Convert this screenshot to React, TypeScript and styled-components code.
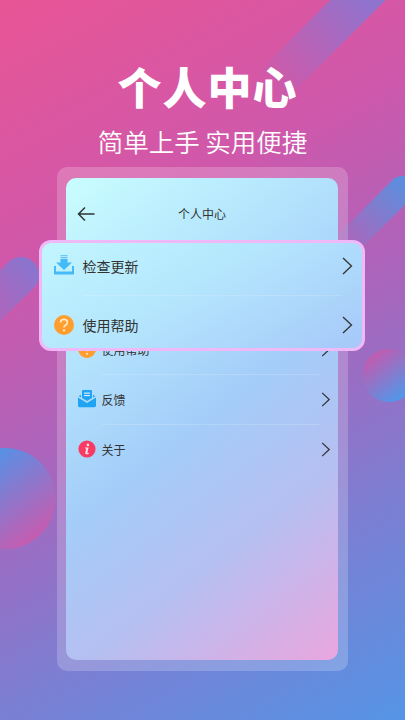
import React from "react";
import styled, { createGlobalStyle } from "styled-components";

const CJK = `"Noto Sans CJK SC", "Noto Sans", sans-serif`;

const GlobalStyle = createGlobalStyle`
  html, body {
    margin: 0;
    padding: 0;
    background: #8f70c8;
    font-family: ${CJK};
  }
`;

const Stage = styled.div`
  position: relative;
  width: 405px;
  height: 720px;
  overflow: hidden;
  box-sizing: border-box;
  padding-top: 64px;
  display: flex;
  flex-direction: column;
  align-items: center;
  background: linear-gradient(152deg, #e85595 0%, #cf58ab 30%, #a965bc 52%, #7d7ed2 75%, #5594e5 100%);
`;

const Backdrop = styled.svg`
  position: absolute;
  inset: 0;
  width: 405px;
  height: 720px;
`;

const Title = styled.h1`
  position: relative;
  margin: 0 0 0 10px;
  font-size: 44px;
  line-height: 44px;
  font-weight: 900;
  letter-spacing: 1px;
  color: #fff;
`;

const Subtitle = styled.h2`
  position: relative;
  margin: 18px 0 11px;
  font-size: 25.5px;
  line-height: 30px;
  font-weight: 350;
  color: #fff;
`;

const Frame = styled.div`
  position: relative;
  width: 291px;
  height: 504px;
  margin-right: 1px;
  box-sizing: border-box;
  padding: 11px 9.5px;
  border-radius: 10px;
  background: rgba(255, 255, 255, 0.2);
`;

const Panel = styled.div`
  height: 100%;
  border-radius: 10px;
  color: #333;
  background: linear-gradient(142deg, #c9feff 0%, #b5e6fd 25%, #a4cdf9 50%, #b5bff1 72%, #e9a6de 100%);
`;

const Header = styled.div`
  position: relative;
  height: 72px;
  box-sizing: border-box;
  padding-bottom: 2px;
  display: flex;
  align-items: center;
  justify-content: center;
  font-size: 12px;
`;

const BackIcon = styled.svg`
  position: absolute;
  left: 11px;
  top: 28px;
  width: 18px;
  height: 16px;
`;

const List = styled.div`
  padding: 74.5px 5px 0 11.5px;
`;

const Row = styled.div<{ $large?: boolean }>`
  display: flex;
  align-items: center;
  gap: ${(p) => (p.$large ? "9px" : "6px")};
  height: ${(p) => (p.$large ? "46px" : "49px")};
  font-size: ${(p) => (p.$large ? "14px" : "12px")};
`;

const Label = styled.span`
  flex: 1;
`;

const Divider = styled.div<{ $left: number; $right: number; $gap?: number }>`
  height: 1px;
  margin: ${(p) => p.$gap ?? 0}px ${(p) => p.$right}px ${(p) => p.$gap ?? 0}px ${(p) => p.$left}px;
  background: rgba(255, 255, 255, 0.16);
`;

const Popup = styled.div`
  position: absolute;
  left: -18px;
  top: 73px;
  width: 326px;
  height: 111px;
  box-sizing: border-box;
  padding: 0 5.5px 0 12px;
  border: 3px solid #efb8f6;
  border-radius: 12px;
  color: #333;
  background: linear-gradient(150deg, #c2f6fe 0%, #b4e6fd 45%, #a6c8f9 100%);
`;

const IconBox = styled.svg<{ $size: number }>`
  flex: none;
  overflow: visible;
  width: ${(p) => p.$size}px;
  height: ${(p) => p.$size}px;
`;

const Chevron = ({ large }: { large?: boolean }) => (
  <IconBox $size={large ? 18 : 15} viewBox="0 0 18 18" fill="none">
    <path d="M5 1l8.5 8L5 17" stroke="#333" strokeWidth={large ? 1.3 : 1.5} />
  </IconBox>
);

const DownloadIcon = ({ size }: { size: number }) => (
  <IconBox $size={size} viewBox="0 1 20 20">
    <g fill="#46b9f7">
      <rect x="6.5" y="0" width="7" height="1.2" opacity="0.7" />
      <rect x="6.5" y="2" width="7" height="1.2" opacity="0.85" />
      <path d="M6.5 4h7v3.5H18L10 15 2 7.5h4.5z" />
      <path d="M0 11h2v5.500h16V11h2v8.500H0z" />
    </g>
  </IconBox>
);

const HelpIcon = ({ size }: { size: number }) => (
  <IconBox $size={size} viewBox="0 0 20 20">
    <circle cx="10" cy="10" r="10" fill="#ff9e2f" />
    <path
      d="M6.6 7.6c0-2 1.5-3.2 3.4-3.2s3.4 1.2 3.4 3c0 2.6-3.4 2.6-3.4 5.2"
      fill="none"
      stroke="#ffe9c8"
      strokeWidth="1.7"
    />
    <circle cx="10" cy="15.4" r="1.1" fill="#ffe9c8" />
  </IconBox>
);

const MailIcon = ({ size }: { size: number }) => (
  <IconBox $size={size} viewBox="0 0 18 18">
    <path d="M4 1.2C4 .5 4.5 0 5.2 0h7.6c.7 0 1.2.5 1.2 1.2V8l-5 3-5-3z" fill="#1fa3f2" />
    <rect x="6" y="2.6" width="6" height="1.1" fill="#dff3ff" />
    <rect x="6" y="5" width="6" height="1.1" fill="#dff3ff" />
    <path d="M0 7.5L9 13l9-5.5v8.100c0 .9-.7 1.600-1.600 1.600H1.600C.7 17.200 0 16.500 0 15.600z" fill="#1fa3f2" />
    <path d="M3 5v2.400L.6 6zM15 5v2.400L17.400 6z" fill="#1fa3f2" />
  </IconBox>
);

const InfoIcon = ({ size }: { size: number }) => (
  <IconBox $size={size} viewBox="0 0 18 18">
    <circle cx="9" cy="9" r="8.6" fill="#f73b63" />
    <circle cx="9.9" cy="4.9" r="1.3" fill="#ffe3e9" />
    <path d="M7 7.6h3.6l-1.2 5c-.1.5.3.7 1.5.2l-.1.9c-1.5.9-3.8 1-3.5-.9l.9-4.2H7z" fill="#ffe3e9" />
  </IconBox>
);

const Backdrops = () => (
  <Backdrop viewBox="0 0 405 720">
    <defs>
      <linearGradient id="stripeTop" gradientUnits="userSpaceOnUse" x1="365" y1="-5" x2="270" y2="90">
        <stop offset="0" stopColor="#8f74cf" />
        <stop offset="1" stopColor="#8f74cf" stopOpacity="0" />
      </linearGradient>
      <linearGradient id="stripeRight" gradientUnits="userSpaceOnUse" x1="402" y1="186" x2="342" y2="252">
        <stop offset="0" stopColor="#5f8ddd" />
        <stop offset="1" stopColor="#5f8ddd" stopOpacity="0" />
      </linearGradient>
      <linearGradient id="stripeLeft" gradientUnits="userSpaceOnUse" x1="30" y1="268" x2="-40" y2="338">
        <stop offset="0" stopColor="#8c74ce" />
        <stop offset="1" stopColor="#8c74ce" stopOpacity="0" />
      </linearGradient>
      <linearGradient id="circleLeft" x1="0.15" y1="0.1" x2="0.8" y2="0.95">
        <stop offset="0" stopColor="#4897ec" />
        <stop offset="1" stopColor="#cb5aae" />
      </linearGradient>
      <linearGradient id="circleRight" x1="0.15" y1="0.1" x2="0.8" y2="0.95">
        <stop offset="0" stopColor="#c559ae" />
        <stop offset="1" stopColor="#4a9bec" />
      </linearGradient>
    </defs>
    <path d="M420 -62L262 96" stroke="url(#stripeTop)" strokeWidth="39" fill="none" />
    <path d="M402 189L335 256" stroke="url(#stripeRight)" strokeWidth="26" strokeLinecap="round" fill="none" />
    <path d="M21 275L-40 336" stroke="url(#stripeLeft)" strokeWidth="36" strokeLinecap="round" fill="none" />
    <circle cx="5" cy="498.5" r="50.5" fill="url(#circleLeft)" />
    <circle cx="389" cy="375.5" r="26.5" fill="url(#circleRight)" />
  </Backdrop>
);

const rows = [
  { label: "使用帮助", Icon: HelpIcon },
  { label: "反馈", Icon: MailIcon },
  { label: "关于", Icon: InfoIcon },
];

export default function App() {
  return (
    <Stage>
      <GlobalStyle />
      <Backdrops />
      <Title>个人中心</Title>
      <Subtitle>简单上手 实用便捷</Subtitle>
      <Frame>
        <Panel>
          <Header>
            <BackIcon viewBox="0 0 18 16" fill="none">
              <path d="M17.5 8H1.5M8 1.5L1.5 8 8 14.5" stroke="#333" strokeWidth="1.5" />
            </BackIcon>
            个人中心
          </Header>
          <List>
            {rows.map((row, i) => (
              <React.Fragment key={row.label}>
                {i > 0 && <Divider $left={24} $right={14} />}
                <Row>
                  <row.Icon size={18} />
                  <Label>{row.label}</Label>
                  <Chevron />
                </Row>
              </React.Fragment>
            ))}
          </List>
        </Panel>
        <Popup>
          <Row $large>
            <DownloadIcon size={20} />
            <Label>检查更新</Label>
            <Chevron large />
          </Row>
          <Divider $left={29} $right={14} $gap={6} />
          <Row $large>
            <HelpIcon size={20} />
            <Label>使用帮助</Label>
            <Chevron large />
          </Row>
        </Popup>
      </Frame>
    </Stage>
  );
}
